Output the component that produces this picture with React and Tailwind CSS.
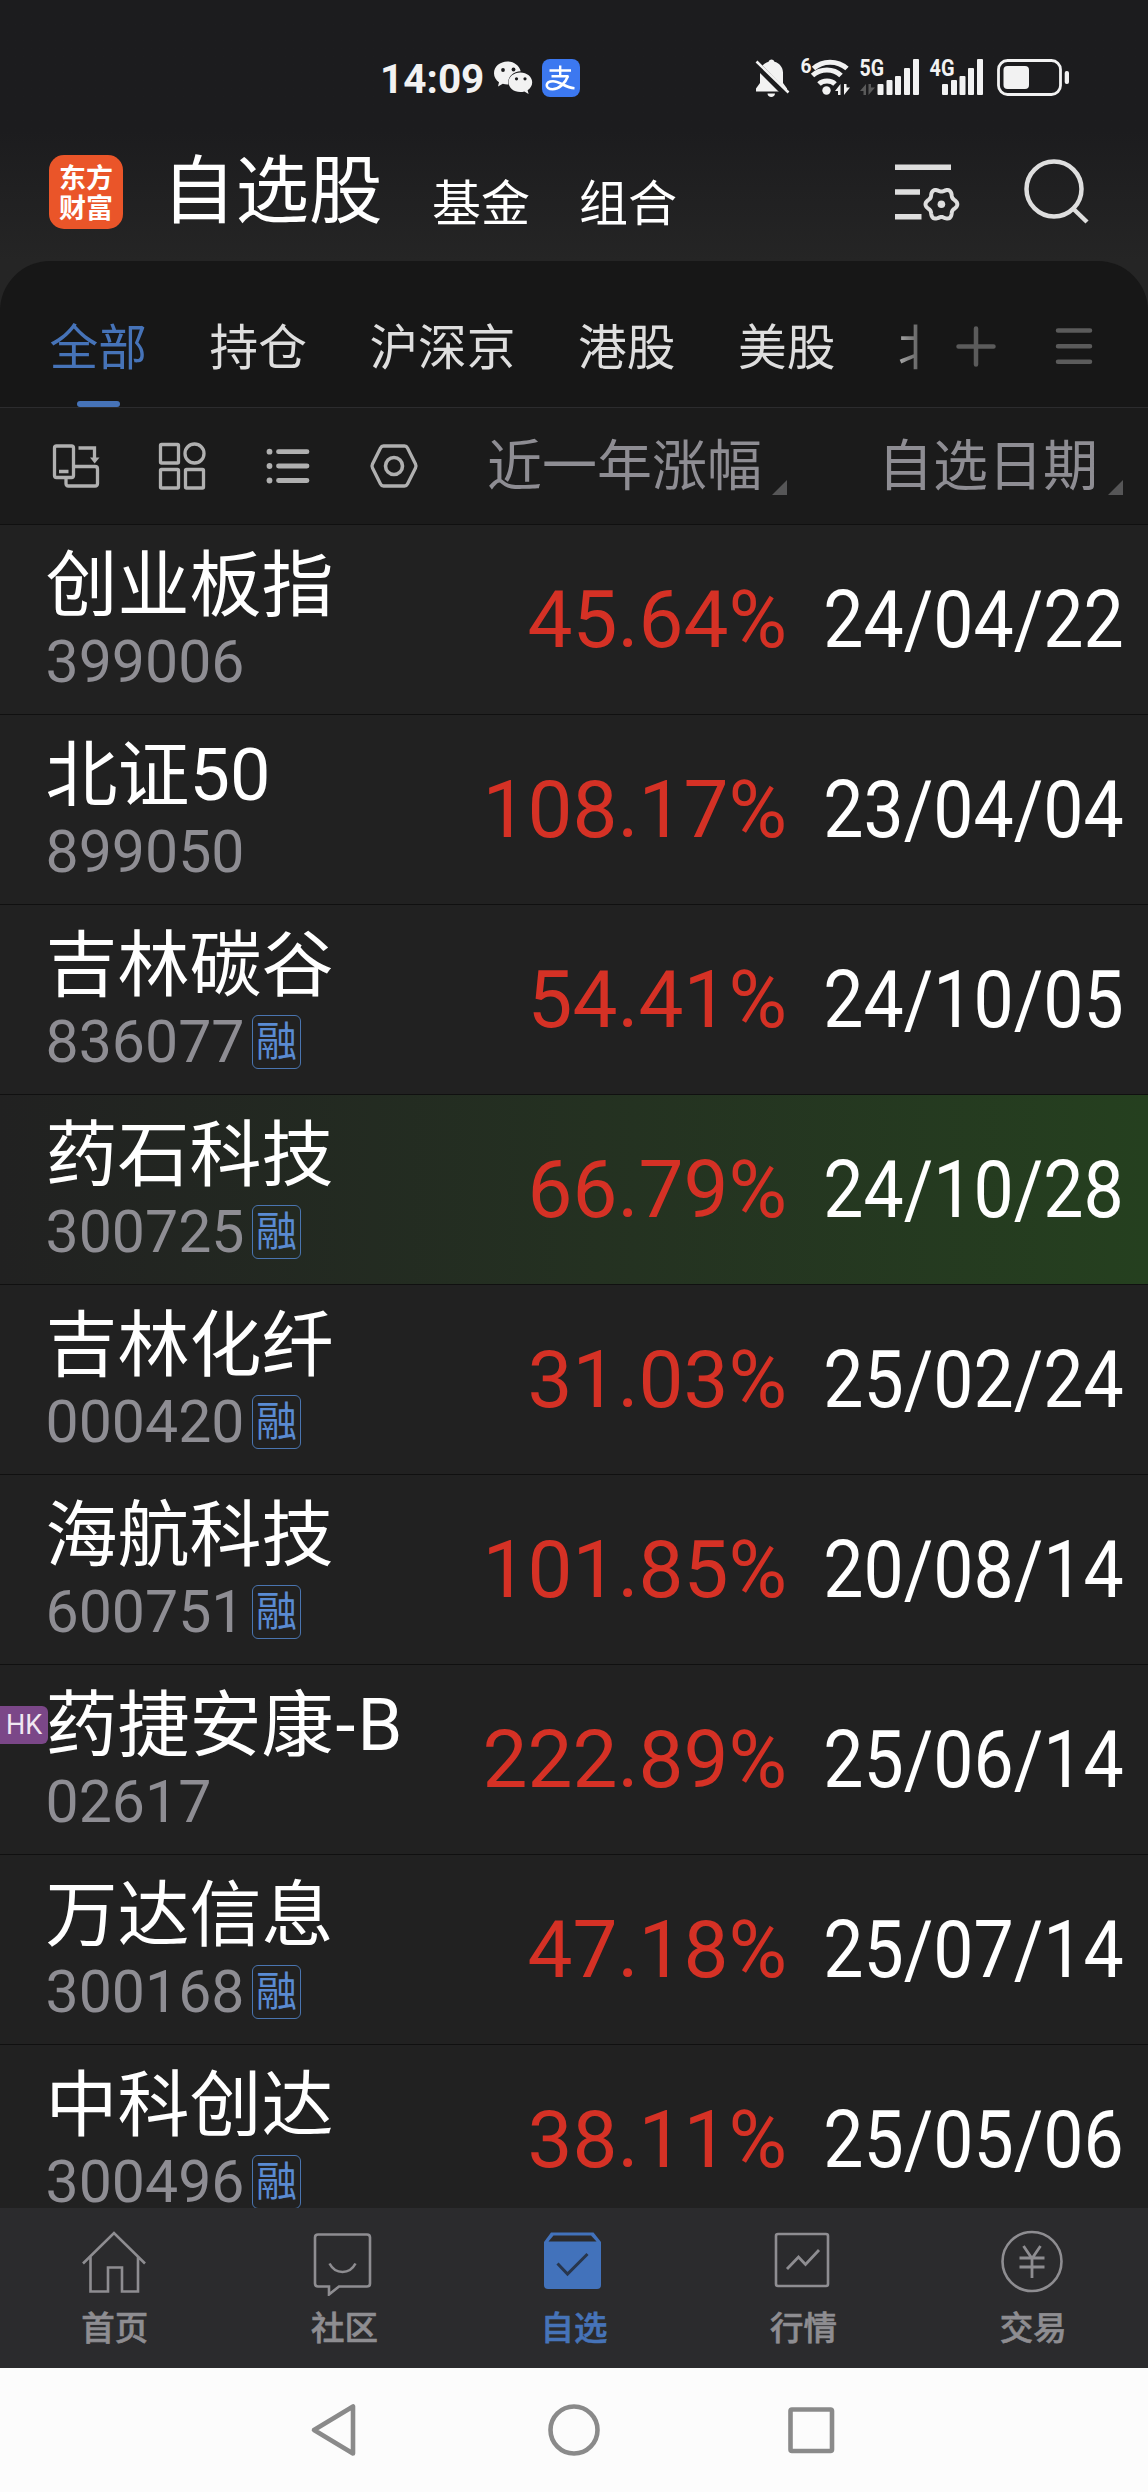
const FONT = "font-['Roboto','Noto_Sans_CJK_SC',sans-serif]";

// Six-lobed gear outline centred on (cx, cy)
function gearPath(cx, cy, base, amp) {
  const pts = [];
  for (let i = 0; i < 120; i++) {
    const t = (i / 120) * Math.PI * 2;
    const r = base + amp * Math.cos(6 * t);
    pts.push((cx + r * Math.cos(t)).toFixed(2) + " " + (cy + r * Math.sin(t)).toFixed(2));
  }
  return "M" + pts.join("L") + "Z";
}

const STOCKS = [
  { name: "创业板指", code: "399006", pct: "45.64%", date: "24/04/22" },
  { name: "北证50", code: "899050", pct: "108.17%", date: "23/04/04" },
  { name: "吉林碳谷", code: "836077", margin: true, pct: "54.41%", date: "24/10/05" },
  { name: "药石科技", code: "300725", margin: true, pct: "66.79%", date: "24/10/28", active: true },
  { name: "吉林化纤", code: "000420", margin: true, pct: "31.03%", date: "25/02/24" },
  { name: "海航科技", code: "600751", margin: true, pct: "101.85%", date: "20/08/14" },
  { name: "药捷安康", suffix: "-B", code: "02617", hk: true, pct: "222.89%", date: "25/06/14" },
  { name: "万达信息", code: "300168", margin: true, pct: "47.18%", date: "25/07/14" },
  { name: "中科创达", code: "300496", margin: true, pct: "38.11%", date: "25/05/06" },
];

function StatusBar() {
  return (
    <div className="flex h-[130px] items-start text-[#f2f2f2]">
      <div className="ml-[380px] mt-[59px] w-[114px] text-[40.500px] leading-[40px] font-bold">14:09</div>
      <svg className="mt-[61px] h-[34px] w-[39px]" viewBox="0 0 39 34" fill="currentColor">
        <path d="M13.5 0.5C6 0.5 0 5.6 0 12.2c0 3.7 1.9 6.8 5 9L4 25.600l4.800-2.800c1.500.4 3 .7 4.700.7l.8 0c-1.200-6.800 4.500-13.200 12.400-13.200C25.400 4.700 20 .5 13.500.5z" />
        <path d="M38.200 21.200c0-5.500-5.300-9.800-11.800-9.800S14.500 15.700 14.500 21.200s5.300 9.800 11.900 9.800c1.400 0 2.700-.2 4-.6l4.200 2.700-1-3.900c2.800-1.800 4.600-4.700 4.600-8z" />
        <g fill="#1c1c1e">
          <circle cx="9" cy="9" r="1.900" />
          <circle cx="19.500" cy="8.500" r="1.900" />
          <circle cx="22.500" cy="17.800" r="1.600" />
          <circle cx="31" cy="17.800" r="1.600" />
        </g>
      </svg>
      <svg className="ml-[9px] mt-[59px] h-[38px] w-[38px]" viewBox="0 0 38 38" fill="none">
        <rect width="38" height="38" rx="8" fill="#3c78f0" />
        <path d="M7.500 11.500h21.500M18.200 6.500v9.500M9.500 17.200h17" stroke="#fff" strokeWidth="2.400" />
        <path d="M26 17c-2.500 7-9 13.200-15.500 13.200-8 0-7.500-8 .5-8 7 0 12 6.500 21.500 7" stroke="#fff" strokeWidth="2.600" />
      </svg>
      <svg className="ml-[174px] mt-[56px] h-[44px] w-[318px]" viewBox="754 56 318 44" fill="currentColor">
        <path d="M771.500 59.500c1.500 0 2.600 1 2.900 2.200 5 1.200 8.600 5.600 8.600 10.800v10.500l4 5.500v3H756v-3l4-5.500V72.500c0-5.200 3.600-9.600 8.600-10.800.3-1.200 1.400-2.200 2.900-2.200zM767.500 93.500h7.500c0 2-1.700 3.500-3.700 3.500s-3.800-1.500-3.800-3.500z" />
        <path d="M754.500 62.500L787 95" stroke="#1c1c1e" strokeWidth="7" />
        <path d="M756.500 61.500L788.500 92.500" stroke="currentColor" strokeWidth="2.600" />
        <text x="800.500" y="73" fontSize="21" fontWeight="700" textLength="11" lengthAdjust="spacingAndGlyphs">6</text>
        <g fill="none" stroke="currentColor" strokeWidth="5">
          <path d="M813.500 68.500c9-8.500 24-8.500 33.500 0" />
          <path d="M812.500 75.500c8-7.500 21-7.500 28.500 0" />
          <path d="M819 84c4-4 12-4 16 0" />
        </g>
        <circle cx="826.500" cy="90.500" r="4.200" />
        <path d="M835 91l5.500-7v11h-2.500v-4zM850 87.500l-6 7.500V84h2.500v3.500z" />
        <text x="859.500" y="76.300" fontSize="23" fontWeight="700" textLength="24.500" lengthAdjust="spacingAndGlyphs">5G</text>
        <path d="M860 91l6-7v11h-2.500v-4zM875 87.500l-6.500 7.500V84h2.500v3.500z" fill="#5a5a5a" />
        <rect x="877.500" y="84" width="6" height="11" rx="1" />
        <rect x="886.500" y="80" width="6" height="15" rx="1" />
        <rect x="895" y="76" width="6" height="19" rx="1" />
        <rect x="904" y="68" width="6" height="27" rx="1" />
        <rect x="913" y="59" width="6" height="36" rx="1" />
        <text x="929.500" y="76.300" fontSize="23" fontWeight="700" textLength="25" lengthAdjust="spacingAndGlyphs">4G</text>
        <rect x="942" y="84" width="6" height="11" rx="1" />
        <rect x="951" y="80" width="6" height="15" rx="1" />
        <rect x="959.500" y="76" width="6" height="19" rx="1" />
        <rect x="968" y="68" width="6" height="27" rx="1" />
        <rect x="977" y="59" width="6" height="36" rx="1" />
        <rect x="998.500" y="60.500" width="62" height="34" rx="9" fill="none" stroke="currentColor" strokeWidth="2.800" />
        <rect x="1003.500" y="66" width="25.500" height="23" rx="4" />
        <rect x="1064.700" y="71" width="4.300" height="13" rx="2" />
      </svg>
    </div>
  );
}

function Header() {
  return (
    <div className="flex h-[131px] items-start text-white">
      <div className="ml-[49px] mt-[25px] flex h-[74px] w-[74px] flex-col items-center justify-center rounded-[15px] bg-[#ea5529] text-[27px] leading-[30.500px] font-bold font-['Noto_Sans_CJK_SC',sans-serif]">
        <div>东方</div>
        <div>财富</div>
      </div>
      <div className="ml-[39px] mt-[26px] w-[220px] whitespace-nowrap text-[73.500px] leading-[73px]">自选股</div>
      <div className="ml-[50px] mt-[50px] w-[98px] text-[49px] leading-[49px]">基金</div>
      <div className="ml-[49px] mt-[50px] w-[98px] text-[49px] leading-[49px]">组合</div>
      <svg className="ml-[216px] mt-[30px] h-[64px] w-[68px]" viewBox="892 160 68 64" fill="none" stroke="#dedede">
        <path d="M894 167.300h56M894 192h25M894 216.700h26.500" strokeWidth="5.400" />
        <path d={gearPath(940.4, 204.3, 14.3, 1.6)} strokeWidth="4" strokeLinejoin="round" />
        <circle cx="940.400" cy="204.300" r="3.800" fill="#dedede" stroke="none" />
      </svg>
      <svg className="ml-[62px] mt-[27px] h-[68px] w-[68px]" viewBox="1022 157 68 68" fill="none" stroke="#dedede" strokeWidth="4.500">
        <circle cx="1053" cy="189" r="27.500" />
        <path d="M1072 208.500l14 13.500" />
      </svg>
    </div>
  );
}

function Tabs() {
  return (
    <div className="flex h-[147px] rounded-t-[50px] border-b border-[#2c2c2e] bg-[#171717] text-[48.700px] leading-[49px] text-[#dedede]">
      <div className="flex w-[922px] gap-[62.600px] overflow-hidden whitespace-nowrap pl-[49.500px]">
        <div className="flex shrink-0 flex-col items-center pt-[63px] text-[#4673b8]">
          全部
          <div className="mt-[28px] h-[6px] w-[43px] rounded-[3px] bg-[#4673b8]" />
        </div>
        <div className="shrink-0 pt-[63px]">持仓</div>
        <div className="shrink-0 pt-[63px]">沪深京</div>
        <div className="shrink-0 pt-[63px]">港股</div>
        <div className="shrink-0 pt-[63px]">美股</div>
        <div className="mt-[63px] h-[60px] shrink-0 bg-gradient-to-r from-[#aaaaaa] to-[#111111] bg-clip-text text-transparent">北</div>
      </div>
      <svg className="ml-[32px] mt-[63px] h-[44px] w-[44px]" viewBox="954 324 44 44" stroke="#5b5b5b" strokeWidth="4.500" strokeLinecap="round">
        <path d="M976 328.500v36M958.500 346.500h35" />
      </svg>
      <svg className="ml-[56px] mt-[63px] h-[44px] w-[40px]" viewBox="1054 324 40 44" stroke="#5b5b5b" strokeWidth="4.500" strokeLinecap="round">
        <path d="M1058 330.500h32M1058 346.300h32M1058 361.800h32" />
      </svg>
    </div>
  );
}

function SortMark() {
  return (
    <svg className="mt-[72px] h-[15px] w-[15px]" viewBox="0 0 15 15">
      <path d="M15 0v15H0z" fill="#565657" />
    </svg>
  );
}

function Toolbar() {
  return (
    <div className="flex h-[117px] items-start border-b border-[#101010] bg-[#1b1b1b] text-[55px] leading-[55px] text-[#8e8d93]">
      <svg className="ml-[48px] mt-[32px] h-[60px] w-[380px] shrink-0" viewBox="48 440 380 60" fill="none" stroke="#b0b0b0" strokeWidth="3.300">
        <rect x="54.500" y="446" width="19" height="31.500" rx="2" />
        <path d="M59 471.500h9.500M78.500 448H94.500v10.500M74.500 466.500h20.500q2.500 0 2.500 2.500v14.500q0 2.500-2.500 2.500h-26.500q-2.500 0-2.500-2.500v-5.500" />
        <path d="M90 457.500h9.500L94.700 463.500z" fill="#b0b0b0" stroke="none" />
        <g>
          <rect x="160.500" y="444.500" width="18" height="18.500" rx="1" />
          <circle cx="194.500" cy="453.500" r="9.500" />
          <rect x="160.500" y="469.500" width="18" height="18.500" rx="1" />
          <rect x="185.500" y="469.500" width="18" height="18.500" rx="1" />
        </g>
        <path d="M278.500 451.700h28.500M278.500 466h28.500M278.500 480.500h28.500" strokeWidth="4.800" strokeLinecap="round" />
        <g fill="#b0b0b0" stroke="none">
          <circle cx="269.500" cy="451.700" r="2.900" />
          <circle cx="269.500" cy="466" r="2.900" />
          <circle cx="269.500" cy="480.500" r="2.900" />
        </g>
        <path d="M383.500 446h21q2 0 3 2l8 16q1 2 0 4l-8 16q-1 2-3 2h-21q-2 0-3-2l-8-16q-1-2 0-4l8-16q1-2 3-2z" />
        <circle cx="394" cy="466" r="8.500" strokeWidth="3.600" />
      </svg>
      <div className="ml-[59px] mt-[31px] whitespace-nowrap">近一年涨幅</div>
      <div className="ml-[10px]"><SortMark /></div>
      <div className="ml-[91px] mt-[31px] whitespace-nowrap">自选日期</div>
      <div className="ml-[10px]"><SortMark /></div>
    </div>
  );
}

function StockRow({ stock }) {
  return (
    <div className={"relative flex h-[190px] shrink-0 border-b border-[#101010] " + (stock.active ? "bg-gradient-to-r from-[#212121] to-[#25401f]" : "bg-[#212121]")}>
      {stock.hk && (
        <div className="absolute left-0 top-[41px] h-[38px] w-[48px] rounded-r-[6px] bg-[#7b4788] pl-[6px] text-[27px] leading-[38px] text-[#f0e8f2]">HK</div>
      )}
      <div className="flex w-[400px] flex-col pl-[45.500px] pt-[25px]">
        <div className="whitespace-nowrap text-[72px] leading-[72px] text-white">
          {stock.name}
          {stock.suffix && <span className="pl-[2px] tracking-[2px]">{stock.suffix}</span>}
        </div>
        <div className="mt-[10px] flex items-start">
          <span className="text-[59px] leading-[60px] text-[#8e8d93]">{stock.code}</span>
          {stock.margin && (
            <span className="ml-[7.500px] mt-[3px] flex h-[54px] w-[49px] items-center justify-center rounded-[6px] border-[1.5px] border-[#4a75b0] text-[41px] leading-[50px] text-[#5a8bd2]">融</span>
          )}
        </div>
      </div>
      <div className="w-[387px] pt-[55px] text-right text-[80px] leading-[80px] text-[#d53125]">{stock.pct}</div>
      <div className="flex w-[337px] justify-end pt-[55px]">
        <div className="origin-right scale-x-[0.895] whitespace-nowrap text-[80px] leading-[80px] text-white">{stock.date}</div>
      </div>
    </div>
  );
}

const NAV = [
  {
    label: "首页",
    icon: <path d="M1 33.500L32 3l31 30.500M8.500 27v34.500h17.500V37.500h14v24H56V27" />,
  },
  {
    label: "社区",
    icon: <><path d="M7 5h49q3 0 3 3v46q0 3-3 3H28l-10 8v-8H7q-3 0-3-3V8q0-3 3-3z" transform="translate(0 -.5)" /><path d="M18.500 33.500q4.500 8.500 13 8.500t13-8.500" /></>,
  },
  {
    label: "自选",
    active: true,
    icon: (
      <>
        <path d="M10 2.500h42.500L60 12v43q0 4-4 4H7q-4 0-4-4V12z" fill="#4272bb" stroke="none" />
        <path d="M12.500 5.500H50L55.500 11.500H7.500z" fill="#2b2b2d" stroke="none" />
        <path d="M16.500 33.500l10 10.500L46.500 24" stroke="#28364d" strokeWidth="3" />
      </>
    ),
  },
  {
    label: "行情",
    icon: <><rect x="5" y="4" width="52" height="52" rx="2" /><path d="M16 39l11.500-12 7 7.500L48 20" strokeWidth="2.800" /></>,
  },
  {
    label: "交易",
    icon: <><circle cx="32" cy="31.500" r="29.500" /><path d="M23.500 16L32 28.500 40.500 16M32 28.500V48M19.500 28h25M19.500 37h25" strokeWidth="2.800" /></>,
  },
];

function BottomNav() {
  return (
    <div className="flex h-[160px] bg-[#2b2b2d]">
      {NAV.map((n) => (
        <div key={n.label} className={"flex flex-1 flex-col items-center pt-[22px] text-[33.500px] leading-[34px] font-medium [-webkit-text-stroke:0.6px_currentColor] " + (n.active ? "text-[#4673b8]" : "text-[#8e8d91]")}>
          <svg className="h-[66px] w-[66px]" viewBox="0 0 66 66" fill="none" stroke="currentColor" strokeWidth="2.600">{n.icon}</svg>
          <div className="mt-[16px]">{n.label}</div>
        </div>
      ))}
    </div>
  );
}

function SystemNav() {
  return (
    <div className="flex h-[124px] items-center bg-[#fcfcfc] pl-[306px]">
      <svg className="h-[60px] w-[540px]" viewBox="306 2400 540 60" fill="none" stroke="#8a8a8a" strokeWidth="4.600" strokeLinejoin="round">
        <path d="M314 2430l39-23.500v47z" />
        <circle cx="574" cy="2430" r="23.500" />
        <rect x="790.500" y="2409.500" width="41.500" height="41.500" rx="1.500" />
      </svg>
    </div>
  );
}

export default function App() {
  return (
    <div className={"flex h-[2492px] w-[1148px] flex-col overflow-hidden bg-[#212121] " + FONT}>
      <div className="bg-[#252525] bg-gradient-to-b from-[#1c1c1e] from-[130px] to-[#252525] to-[261px]">
        <StatusBar />
        <Header />
        <Tabs />
      </div>
      <Toolbar />
      <div className="flex h-[1683px] flex-col overflow-hidden">
        {STOCKS.map((s) => (
          <StockRow key={s.code} stock={s} />
        ))}
      </div>
      <BottomNav />
      <SystemNav />
    </div>
  );
}
